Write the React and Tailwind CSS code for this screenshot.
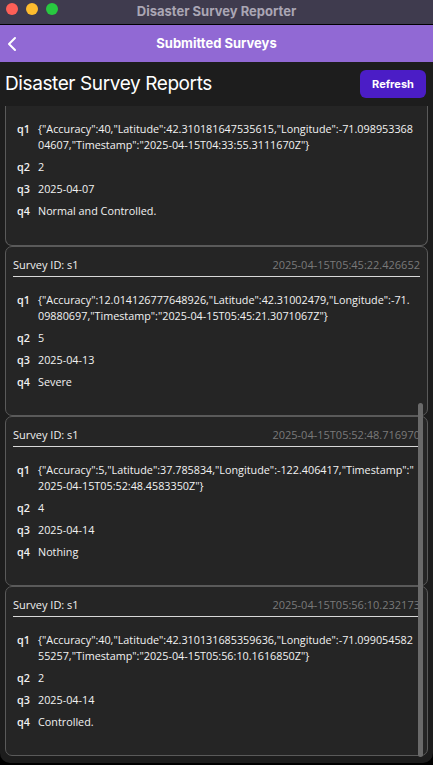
import React from "react";

const cards = [
  {
    ts: "2025-04-15T04:33:55.311167",
    q: [
      '{"Accuracy":40,"Latitude":42.310181647535615,"Longitude":-71.09895336804607,"Timestamp":"2025-04-15T04:33:55.3111670Z"}',
      "2",
      "2025-04-07",
      "Normal and Controlled.",
    ],
  },
  {
    ts: "2025-04-15T05:45:22.426652",
    q: [
      '{"Accuracy":12.014126777648926,"Latitude":42.31002479,"Longitude":-71.09880697,"Timestamp":"2025-04-15T05:45:21.3071067Z"}',
      "5",
      "2025-04-13",
      "Severe",
    ],
  },
  {
    ts: "2025-04-15T05:52:48.716970",
    q: [
      '{"Accuracy":5,"Latitude":37.785834,"Longitude":-122.406417,"Timestamp":"2025-04-15T05:52:48.4583350Z"}',
      "4",
      "2025-04-14",
      "Nothing",
    ],
  },
  {
    ts: "2025-04-15T05:56:10.232173",
    q: [
      '{"Accuracy":40,"Latitude":42.310131685359636,"Longitude":-71.09905458255257,"Timestamp":"2025-04-15T05:56:10.1616850Z"}',
      "2",
      "2025-04-14",
      "Controlled.",
    ],
  },
];

function Answers({ q }) {
  return (
    <div className="flex flex-col gap-[6px] pl-[4px]">
      {q.map((v, i) => (
        <div key={i} className="flex text-[10.8px] leading-[16px] text-[#f2f2f2]">
          <span className="w-[21px] shrink-0 font-semibold">q{i + 1}</span>
          <span className="min-w-0 flex-1 [overflow-wrap:anywhere] pr-[5px]">{v}</span>
        </div>
      ))}
    </div>
  );
}

function Card({ c }) {
  return (
    <div className="mx-[5px] h-[170px] rounded-[7px] border border-[#5a5a5a] bg-[#252525] px-[7px] pt-[9px]">
      <div className="flex items-center justify-between h-[18px] overflow-hidden">
        <span className="text-[11px] text-[#f0f0f0] whitespace-nowrap">Survey ID: s1</span>
        <span className="text-[11px] text-[#7a7a7a] whitespace-nowrap">{c.ts}</span>
      </div>
      <div className="mt-[2px] h-px bg-[#d8d8d8]" />
      <div className="mt-[15px]">
        <Answers q={c.q} />
      </div>
    </div>
  );
}

function PartialCard({ c }) {
  return (
    <div className="mx-[5px] h-[140px] rounded-b-[7px] border border-t-0 border-[#5a5a5a] bg-[#252525] px-[7px] pt-[15px]">
      <Answers q={c.q} />
    </div>
  );
}

export default function App() {
  return (
    <div className="w-[433px] h-[765px] bg-black" style={{ fontFamily: '"Open Sans", "Liberation Sans", sans-serif' }}>
      <div className="h-[763px] rounded-b-[10px] overflow-hidden bg-[#1d1d1d] flex flex-col">
        <div className="relative h-[24px] bg-[#3f3b4e] flex items-center justify-center shrink-0">
          <div className="absolute left-[6px] top-[3px] flex gap-[8px]">
            <span className="w-[12px] h-[12px] rounded-full bg-[#fe5f57]" />
            <span className="w-[12px] h-[12px] rounded-full bg-[#febc2e]" />
            <span className="w-[12px] h-[12px] rounded-full bg-[#28c840]" />
          </div>
          <span className="text-[13px] font-bold text-[#aaa6b4]" style={{ fontFamily: 'Inter, "Liberation Sans", sans-serif' }}>Disaster Survey Reporter</span>
        </div>
        <div className="h-px bg-black shrink-0" />
        <div className="relative h-[37px] bg-[#9169d4] flex items-center justify-center shrink-0">
          <svg className="absolute left-[6px] top-[11px]" width="12" height="16" viewBox="0 0 12 16" fill="none">
            <path d="M9 2 L3 8 L9 14" stroke="white" strokeWidth="2" strokeLinecap="round" strokeLinejoin="round" />
          </svg>
          <span className="text-[13px] font-bold text-white" style={{ fontFamily: 'Inter, "Liberation Sans", sans-serif' }}>Submitted Surveys</span>
        </div>
        <div className="flex items-center justify-between pl-[5px] pr-[7px] h-[44px] shrink-0">
          <span className="text-[19px] tracking-[-0.4px] text-white" style={{ fontFamily: 'Inter, "Liberation Sans", sans-serif' }}>Disaster Survey Reports</span>
          <button className="h-[28px] w-[66px] rounded-[6px] bg-[#4b1dc6] text-[11px] font-bold text-white" style={{ fontFamily: 'Inter, "Liberation Sans", sans-serif' }}>Refresh</button>
        </div>
        <div className="relative flex-1 overflow-hidden">
          <div className="flex flex-col">
            <PartialCard c={cards[0]} />
            {cards.slice(1).map((c, i) => (
              <Card key={i} c={c} />
            ))}
          </div>
          <div className="absolute right-[10px] top-[297px] h-[354px] w-[5px] rounded-full bg-[#6a6a6a]" />
        </div>
      </div>
    </div>
  );
}
